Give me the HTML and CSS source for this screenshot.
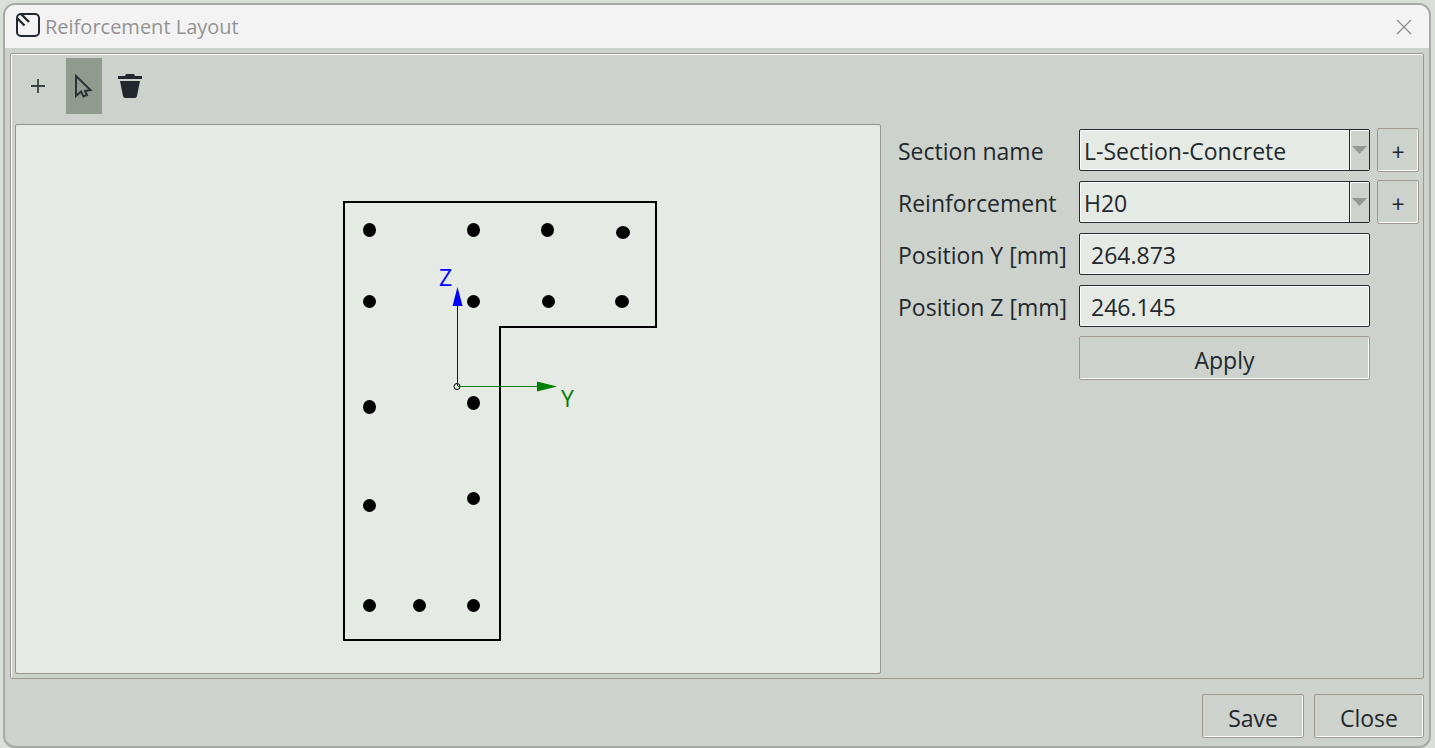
FILE: index.html
```html
<!DOCTYPE html>
<html lang="en">

<head>
    <meta charset="UTF-8">
    <meta name="viewport" content="width=device-width, initial-scale=1.0">
    <title>Reiforcement Layout</title>
    <link rel="stylesheet" href="styles.css">
</head>

<body>
    <div class="window">
        <header class="titlebar">
            <svg class="app-icon" width="24" height="24" viewBox="0 0 24 24">
                <rect x="1" y="1" width="22" height="22" rx="4" fill="none" stroke="#22282d" stroke-width="2"/>
                <path d="M1.500 5.500l7 7M5.500 1.500l7.500 7.500" fill="none" stroke="#22282d" stroke-width="2.400"/>
            </svg>
            <h1>Reiforcement Layout</h1>
            <button class="close-icon" type="button" aria-label="Close window">
                <svg width="16" height="16" viewBox="0 0 16 16">
                    <path d="M1 1l14 14M15 1L1 15" fill="none" stroke="#8c8c8c" stroke-width="1.3"/>
                </svg>
            </button>
        </header>

        <main class="frame">
            <!-- Toolbar -->
            <div class="toolbar">
                <button class="tool" type="button" aria-label="Add bar">
                    <svg width="24" height="24" viewBox="0 0 24 24">
                        <path d="M12 5v14M5 12h14" fill="none" stroke="#3b4246" stroke-width="1.8"/>
                    </svg>
                </button>
                <button class="tool active" type="button" aria-label="Select bar">
                    <svg width="24" height="24" viewBox="0 0 24 24">
                        <path d="M4 2v20l5-4.500 2.500 5 3.500-1.500-2-4 5.500-1z" fill="none" stroke="#2b3236" stroke-width="2"/>
                    </svg>
                </button>
                <button class="tool" type="button" aria-label="Delete bar">
                    <svg width="24" height="24" viewBox="0 0 24 24">
                        <path d="M0 2h7l1-2h8l1 2h7v3H0zM2 7h20l-3 15q-.5 2-2 2H7q-1.500 0-2-2z" fill="#22282d"/>
                    </svg>
                </button>
            </div>

            <div class="content">
                <!-- Section drawing -->
                <div class="canvas">
                    <svg viewBox="0 0 864 548" role="img" aria-label="L-section with reinforcement bars">
                        <path class="outline" d="M328 77H640V202H484V515H328z"/>
                        <g class="bars">
                            <ellipse cx="353.500" cy="105" rx="6.500" ry="7"/>
                            <ellipse cx="457.500" cy="105" rx="6.500" ry="7"/>
                            <ellipse cx="531.500" cy="105" rx="6.500" ry="7"/>
                            <ellipse cx="607" cy="107.500" rx="7" ry="6.500"/>
                            <circle cx="353.500" cy="176.500" r="6.500"/>
                            <circle cx="457.500" cy="176.500" r="6.500"/>
                            <circle cx="532.500" cy="176.500" r="6.500"/>
                            <ellipse cx="606" cy="176.500" rx="7" ry="6.500"/>
                            <ellipse cx="353.500" cy="282" rx="6.500" ry="7"/>
                            <ellipse cx="457.500" cy="278" rx="6.500" ry="7"/>
                            <circle cx="353.500" cy="380.500" r="6.500"/>
                            <circle cx="457.500" cy="373.500" r="6.500"/>
                            <circle cx="353.500" cy="480.500" r="6.500"/>
                            <circle cx="403.500" cy="480.500" r="6.500"/>
                            <circle cx="457.500" cy="480.500" r="6.500"/>
                        </g>
                        <circle cx="441" cy="261.500" r="3" fill="none" stroke="#000"/>
                        <g class="axis-z">
                            <path d="M441.500 261V180" stroke-width="1"/>
                            <path d="M441.500 162l5 19h-10z" stroke="none"/>
                            <text x="423" y="161">Z</text>
                        </g>
                        <g class="axis-y">
                            <path d="M442 261.500H522" stroke-width="1"/>
                            <path d="M541 261.500l-20-5v10z" stroke="none"/>
                            <text x="545" y="282">Y</text>
                        </g>
                    </svg>
                </div>

                <!-- Properties -->
                <form class="properties">
                    <label for="section">Section name</label>
                    <div class="combo">
                        <select id="section">
                            <option>L-Section-Concrete</option>
                        </select>
                        <svg class="arrow" viewBox="0 0 19 40">
                            <path d="M2 16h15l-7.500 8z"/>
                        </svg>
                    </div>
                    <button class="btn" type="button" aria-label="Add section">+</button>

                    <label for="reinforcement">Reinforcement</label>
                    <div class="combo">
                        <select id="reinforcement">
                            <option>H20</option>
                        </select>
                        <svg class="arrow" viewBox="0 0 19 40">
                            <path d="M2 16h15l-7.500 8z"/>
                        </svg>
                    </div>
                    <button class="btn" type="button" aria-label="Add reinforcement">+</button>

                    <label for="posY">Position Y [mm]</label>
                    <input id="posY" type="text" value="264.873">

                    <label for="posZ">Position Z [mm]</label>
                    <input id="posZ" type="text" value="246.145">

                    <button class="btn apply" type="button">Apply</button>
                </form>
            </div>
        </main>

        <footer class="actions">
            <button class="btn" type="button">Save</button>
            <button class="btn" type="button">Close</button>
        </footer>
    </div>
</body>

</html>
```

FILE: styles.css
```css
* {
    box-sizing: border-box;
}

body {
    margin: 0;
    padding: 3px 4px 0 3px;
    min-height: 100vh;
    display: flex;
    background-color: #dbdfd9;
    color: #22282d;
    font-family: "Open Sans", "Noto Sans", sans-serif;
    font-size: 23px;
}

button, input, select {
    font: inherit;
    color: inherit;
    margin: 0;
}

.window {
    flex: 1;
    display: flex;
    flex-direction: column;
    border: 2px solid #a6aaa6;
    border-radius: 12px;
    background-color: #cdd2cc;
    overflow: hidden;
}

.titlebar {
    display: flex;
    align-items: center;
    gap: 5px;
    height: 43px;
    padding: 0 17px 0 11px;
    background-color: #f3f3f3;
}

.app-icon {
    margin-bottom: 4px;
}

.titlebar h1 {
    flex: 1;
    margin: 0;
    font-size: 20px;
    font-weight: normal;
    color: #939393;
}

.close-icon {
    display: flex;
    padding: 0;
    border: none;
    background: none;
}

.frame {
    flex: 1;
    display: flex;
    flex-direction: column;
    margin: 5px 5px 0;
    padding: 3px 3px 4px;
    border: 1px solid #a0978f;
    border-radius: 2px;
    box-shadow: inset 1px 1px #fff;
}

.toolbar {
    display: flex;
    gap: 10px;
    padding: 1px 6px 10px;
}

.tool {
    display: flex;
    align-items: center;
    justify-content: center;
    width: 36px;
    height: 56px;
    padding: 0;
    border: none;
    background: none;
}

.tool.active {
    background-color: #919a8f;
}

.content {
    flex: 1;
    display: flex;
    gap: 17px;
}

.canvas {
    flex: 1;
    display: flex;
    margin-left: 1px;
    border: 1px solid #98958f;
    border-radius: 2px;
    background-color: #e5eae4;
}

.canvas svg {
    flex: 1;
    width: 100%;
}

.outline {
    fill: none;
    stroke: #000;
    stroke-width: 2;
}

.axis-z {
    fill: #00f;
    stroke: #00f;
}

.axis-y {
    fill: #008000;
    stroke: #008000;
}

.canvas text {
    stroke: none;
}

.properties {
    display: grid;
    grid-template-columns: 174px 291px 42px;
    grid-auto-rows: 44px;
    gap: 8px 7px;
    align-items: center;
    align-content: start;
    padding: 4px 1px 0 0;
}

.properties label {
    grid-column: 1;
    padding-top: 2px;
    white-space: nowrap;
}

.properties input,
.properties select {
    width: 100%;
    height: 42px;
    border: 1px solid #22282d;
    border-radius: 2px;
    background-color: #e5eae4;
    box-shadow: inset 0 0 0 1px #fff;
    padding: 1px 11px 0;
}

.combo {
    position: relative;
}

.properties select {
    display: block;
    appearance: none;
    padding: 1px 24px 0 4px;
}

/* drop-down arrow over the right end of the select */
.arrow {
    position: absolute;
    top: 1px;
    right: 1px;
    width: 20px;
    height: 40px;
    border-left: 1px solid #22282d;
    background-color: #cdd2cc;
    box-shadow: inset 1px 1px #fff;
    fill: #919a8f;
    pointer-events: none;
}

.btn {
    height: 44px;
    padding: 3px 0 0;
    border: 1px solid #a0978f;
    border-radius: 2px;
    background-color: #cdd2cc;
    box-shadow: inset -1px -1px #fff;
}

.apply {
    grid-column: 2;
}

.actions {
    display: flex;
    justify-content: flex-end;
    gap: 10px;
    padding: 15px 5px 8px;
}

.actions .btn {
    padding: 3px 25px 0;
}
```
